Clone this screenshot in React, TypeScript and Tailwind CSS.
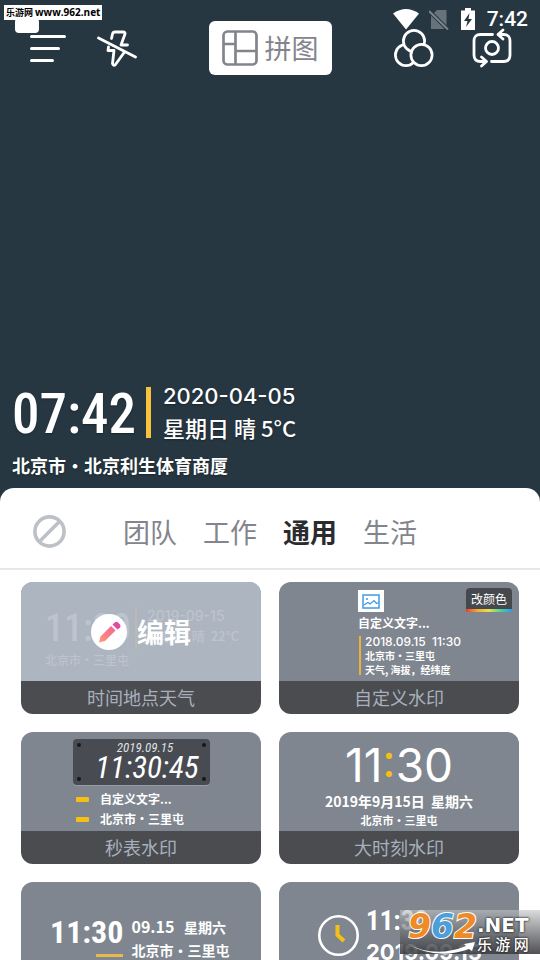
import type { ReactNode } from "react";

const cjk = "font-['Noto_Sans_CJK_SC','Noto_Sans_CJK_TC',sans-serif]";
const digits = "font-['Roboto_Condensed','Noto_Sans_CJK_SC',sans-serif]";
const inter = "font-['Inter','Noto_Sans_CJK_SC',sans-serif]";
const shadow = "[text-shadow:0_1px_2px_rgba(0,0,0,0.35)]";

function MenuIcon() {
  return (
    <svg viewBox="0 0 36 30" className="h-[30px] w-9" fill="none" stroke="#fff" strokeWidth="3" strokeLinecap="round">
      <path d="M1.500 3.500H34.500M1.500 15.500H28.500M1.500 27.500H22.500" />
    </svg>
  );
}

function FlashOffIcon() {
  return (
    <svg viewBox="0 0 40 38" className="h-[38px] w-10" fill="none" stroke="#fff" strokeWidth="2.800" strokeLinecap="round" strokeLinejoin="round">
      <path d="M14.500 9.500L15.500 5Q16 3 18 3H26Q28.500 3 28 5L24 16H30.500" />
      <path d="M11.500 18L11 21.500H17L15.500 34.500Q16.500 37.500 18.500 35.500L27.500 23" />
      <path d="M1.500 9L38.500 28" />
    </svg>
  );
}

function CollageIcon() {
  return (
    <svg viewBox="0 0 36 36" className="size-9" fill="none" stroke="#83858d" strokeWidth="2.700">
      <rect x="1.500" y="1.500" width="33" height="33" rx="4" />
      <path d="M13.500 1.500V34.500M1.500 14H13.500M13.500 21H34.500" />
    </svg>
  );
}

function FilterIcon() {
  return (
    <svg viewBox="0 0 40 40" className="size-10" fill="#263742" stroke="#fff" strokeWidth="2.700">
      <circle cx="12" cy="27" r="10.600" />
      <circle cx="20" cy="13" r="10.600" />
      <circle cx="27.500" cy="27" r="10.600" />
    </svg>
  );
}

function SwitchCameraIcon() {
  return (
    <svg viewBox="0 0 40 40" className="size-10" fill="none" stroke="#fff" strokeWidth="2.800" strokeLinecap="round" strokeLinejoin="round">
      <path d="M20.500 6.500H8.500Q2 6.500 2 13V27Q2 33.500 8.500 33.500H14" />
      <path d="M19.500 33.500H31.500Q38 33.500 38 27V13Q38 6.500 31.500 6.500H26.500" />
      <path d="M31 2L26 6.500L31 11M9.500 29L14.500 33.500L9.500 38" />
      <circle cx="20" cy="20" r="6.500" />
    </svg>
  );
}

function StatusBar() {
  return (
    <div className="absolute top-[7px] right-3 flex items-center text-white">
      <svg viewBox="0 0 26 22" className="h-[22px] w-[26px]" fill="#fff">
        <path d="M0 5.500Q13-3.500 26 5.500L13 21.500Z" />
      </svg>
      <svg viewBox="0 0 20 22" className="ml-[10px] h-[22px] w-5">
        <path d="M8 2H17.500V21H2V8Z" fill="#67727a" />
        <path d="M0 3L19 21.500" stroke="#263742" strokeWidth="4" />
        <path d="M0 3L19 21.500" stroke="#7b858b" strokeWidth="2" />
      </svg>
      <svg viewBox="0 0 14 22" className="mr-3 ml-3 h-[22px] w-[14px]">
        <path d="M4 0H10V2.500H14V22H0V2.500H4Z" fill="#fff" />
        <path d="M8.500 5L3 13H6.500L5 19L11 11H7.500Z" fill="#263742" />
      </svg>
      <span className="font-['Roboto',sans-serif] text-[21px] leading-6 font-medium">7:42</span>
    </div>
  );
}

function Card({ label, children, extra }: { label: string; children: ReactNode; extra?: ReactNode }) {
  return (
    <article className="relative overflow-hidden rounded-xl">
      <button type="button" className="block w-full text-left">
        <span className="block h-[99px] bg-[#80868f] text-white">{children}</span>
        <span className="block h-[33px] bg-[#4a4c50] text-center text-lg leading-8 text-[#a9b0bd]">{label}</span>
      </button>
      {extra}
    </article>
  );
}

function WeatherCard() {
  return (
    <Card label="时间地点天气">
      <span className="relative block h-full bg-[#adb5c0] pt-6 pl-6 text-[#bec4cd]">
        <span className="flex gap-[10px]">
          <span className={`${digits} w-20 text-[38px] leading-[44px] font-medium`}>11:30</span>
          <span className="w-0.5 bg-[#bdb9ad]" />
          <span className="text-[13px] leading-5 font-medium">
            <span className={`${inter} block text-sm leading-5`}>2019-09-15</span>
            <span className="block whitespace-pre">星期日  晴  22°C</span>
          </span>
        </span>
        <span className="block text-xs leading-5 font-medium">北京市・三里屯</span>
        <span className="absolute inset-0 flex items-center justify-center gap-[10px] text-white">
          <svg viewBox="0 0 36 36" className="size-9">
            <defs>
              <linearGradient id="pencil" x1="0" y1="1" x2="1" y2="0">
                <stop offset="0" stopColor="#ff9a76" />
                <stop offset="1" stopColor="#f0609a" />
              </linearGradient>
            </defs>
            <circle cx="18" cy="18" r="18" fill="#fff" />
            <path d="M8 28.500L9.500 22.500L20 12L24.500 16.500L14 27Z" fill="url(#pencil)" />
            <path d="M21.500 10.500L24 8.200Q25.500 7 27 8.500L29 10.500Q30.300 12 29 13.500L26.500 15.500Z" fill="#e4489f" />
          </svg>
          <span className="text-[27px] leading-9 font-bold">编辑</span>
        </span>
      </span>
    </Card>
  );
}

function CustomCard() {
  return (
    <Card
      label="自定义水印"
      extra={
        <button type="button" className="absolute top-1.5 right-[7px] w-[46px] overflow-hidden rounded-t bg-[#45484c] text-xs text-white">
          <span className="block leading-[21px]">改颜色</span>
          <span className="block h-[3px] bg-[linear-gradient(90deg,#e8402c,#f5a93b,#e8e04a,#4fd0a0,#2b9bf0)]" />
        </button>
      }
    >
      <span className="block pt-2 pl-[79px]">
        <svg viewBox="0 0 26 22" className="h-[22px] w-[26px]" fill="none" stroke="#3f9be6" strokeWidth="1.500">
          <rect width="26" height="22" fill="#fff" stroke="none" />
          <rect x="5" y="5" width="16" height="13" />
          <path d="M6 15L10 12.500L12 14L16 10.500L18.500 13.500L20.500 12.500" strokeWidth="1.200" />
          <circle cx="9" cy="9" r="1" fill="#3f9be6" stroke="none" />
        </svg>
        <span className="block text-xs leading-[22px] font-bold">自定义文字...</span>
        <span className="flex gap-1">
          <span className="my-0.5 ml-px w-0.5 bg-[#e9b23c]" />
          <span className="text-[10px] leading-[14px] font-bold">
            <span className={`${inter} block text-xs leading-[15px] font-medium whitespace-pre`}>2018.09.15  11:30</span>
            <span className="block">北京市・三里屯</span>
            <span className="block">天气, 海拔，经纬度</span>
          </span>
        </span>
      </span>
    </Card>
  );
}

function StopwatchCard() {
  return (
    <Card label="秒表水印">
      <span className="flex flex-col items-center pt-[7px]">
        <span className={`${digits} relative block h-[46px] w-[137px] rounded bg-[#484b51] pt-[3px] text-center italic shadow-[0_1px_0_#979ca3]`}>
          <span className="absolute top-1 left-1 size-1 rounded-full bg-[#17181a]" />
          <span className="absolute top-1 right-1 size-1 rounded-full bg-[#17181a]" />
          <span className="absolute bottom-1 left-1 size-1 rounded-full bg-[#17181a]" />
          <span className="absolute right-1 bottom-1 size-1 rounded-full bg-[#17181a]" />
          <span className="block pl-2 text-[13px] leading-3 text-[#dfe0e2]">2019.09.15</span>
          <span className="block pl-3 text-[31px] leading-7">11:30:45</span>
        </span>
      </span>
      <span className="mt-1 block pl-[55px] text-xs leading-5 font-bold">
        <span className="flex items-center gap-[11px]">
          <span className="h-[5px] w-[13px] rounded-[1px] bg-[#f5c015]" />
          自定义文字...
        </span>
        <span className="flex items-center gap-[11px]">
          <span className="h-[5px] w-[13px] rounded-[1px] bg-[#f5c015]" />
          北京市・三里屯
        </span>
      </span>
    </Card>
  );
}

function BigTimeCard() {
  return (
    <Card label="大时刻水印">
      <span className="block pt-2 text-center font-bold">
        <span className={`${inter} block text-[46px] leading-[50px] font-normal`}>
          11<span className="text-[#f5c015]">:</span>30
        </span>
        <span className="block text-sm leading-[22px] whitespace-pre">2019年9月15日  星期六</span>
        <span className="block text-[11px] leading-4">北京市・三里屯</span>
      </span>
    </Card>
  );
}

function UnderlineCard() {
  return (
    <Card label="时间下划线">
      <span className="flex gap-2 pt-[33px] pl-[29px] font-bold">
        <span className={`${digits} block text-[32px] leading-[34px]`}>
          11:30
          <span className="mt-[5px] ml-auto block h-[3px] w-[27px] bg-[#e9b94a]" />
        </span>
        <span className="block text-sm leading-[23px]">
          <span className="block whitespace-pre">
            <span className="text-base leading-[23px]">09.15</span>   星期六
          </span>
          <span className="block">北京市・三里屯</span>
        </span>
      </span>
    </Card>
  );
}

function ClockCard() {
  return (
    <Card label="时钟水印">
      <span className="flex gap-[7px] pt-6 pl-[39px] font-bold">
        <svg viewBox="0 0 41 41" className="mt-[9px] size-[41px]" fill="none">
          <circle cx="20.500" cy="20.500" r="19.200" stroke="#fff" strokeWidth="2.600" />
          <path d="M19.500 10V20L26 26" stroke="#f5c015" strokeWidth="4" />
        </svg>
        <span className="block">
          <span className={`${digits} block text-[27px] leading-[30px]`}>11:30</span>
          <span className={`${inter} block text-[22px] leading-8`}>2019.09.15</span>
        </span>
      </span>
    </Card>
  );
}

function SiteBadge() {
  return (
    <div className="absolute right-0 bottom-1.5 flex h-11 w-[140px] bg-linear-to-b from-[#c3c5c8]/60 to-[#3c3e42]/90 pl-2 text-white">
      <svg viewBox="0 0 70 12" className="absolute bottom-0 left-1.5 h-3 w-[70px]" fill="#fff">
        <path d="M0 1Q28 17 60 4L58 2L69 0L66 9L63 7Q30 19 0 1Z" />
      </svg>
      <span className="font-['DejaVu_Sans',sans-serif] text-[33px] leading-[34px] font-bold text-[#f08a24] italic [paint-order:stroke] [-webkit-text-stroke:2px_white]">
        9<span className="text-[#4d9fdc]">6</span>2
      </span>
      <span className="block pt-[5px] [text-shadow:0_0_2px_#222,0_0_2px_#222]">
        <span className="block font-['DejaVu_Sans',sans-serif] text-[20px] leading-5 font-bold">.NET</span>
        <span className="block text-[15px] leading-[18px] font-medium">乐 游 网</span>
      </span>
    </div>
  );
}

const tabs = ["团队", "工作", "通用", "生活"];

export default function App() {
  return (
    <div className={`${cjk} relative flex h-screen flex-col overflow-hidden bg-[#263742]`} lang="zh-CN">
      <header className="grid grid-cols-[1fr_auto_1fr] items-center pt-[21px]">
        <div className="flex items-center gap-[31px] pl-[30px]">
          <button type="button" aria-label="菜单"><MenuIcon /></button>
          <button type="button" aria-label="闪光灯"><FlashOffIcon /></button>
        </div>
        <button type="button" className="flex h-[54px] items-center gap-[7px] rounded-md bg-white px-[13px] text-[27px] leading-9 text-[#83858d]">
          <CollageIcon />
          拼图
        </button>
        <div className="flex items-center justify-end gap-[38px] pr-7">
          <button type="button" aria-label="滤镜"><FilterIcon /></button>
          <button type="button" aria-label="切换摄像头"><SwitchCameraIcon /></button>
        </div>
      </header>
      <StatusBar />
      <div className="absolute top-[18px] left-[15px] h-[15px] w-6 rounded-sm bg-white" />
      <div className="absolute top-[5px] left-1 bg-white px-0.5 text-[9px] leading-[14px] font-bold whitespace-nowrap text-black">
        乐游网 <span className="font-['Open_Sans',sans-serif] text-[10px] leading-[14px]">www.962.net</span>
      </div>

      <main className="flex flex-1 flex-col justify-end pb-[9px] pl-3 text-white">
        <div className={`${shadow} flex items-center`}>
          <time className={`${digits} pt-1 text-[55px] leading-[58px] font-medium`}>07:42</time>
          <span className="mr-3 ml-[10px] h-[51px] w-[5px] bg-[#f9c23c]" />
          <div className="text-[22px] leading-[31px] font-medium">
            <p className={inter}>2020-04-05</p>
            <p>星期日 晴 5°C</p>
          </div>
        </div>
        <p className={`${shadow} mt-2 text-lg leading-7 font-bold`}>北京市・北京利生体育商厦</p>
      </main>

      <section className="h-[472px] shrink-0 overflow-hidden rounded-t-[14px] bg-white">
        <nav className="flex h-[82px] items-center border-b-2 border-[#e6e6eb] pt-1.5 pl-[33px]">
          <button type="button" aria-label="无水印">
            <svg viewBox="0 0 33 33" className="size-[33px]" fill="none" stroke="#bcc1c8" strokeWidth="3.600">
              <circle cx="16.500" cy="16.500" r="14.600" />
              <path d="M6.500 26.500L26.500 6.500" />
            </svg>
          </button>
          <div className="ml-[57px] flex gap-[26px] pt-0.5 text-[27px] leading-9 text-[#83858d]">
            {tabs.map((tab) => (
              <button key={tab} type="button" className={tab === "通用" ? "font-bold text-[#2b2b2d]" : ""}>
                {tab}
              </button>
            ))}
          </div>
        </nav>
        <div className="grid grid-cols-2 gap-[18px] px-[21px] pt-3">
          <WeatherCard />
          <CustomCard />
          <StopwatchCard />
          <BigTimeCard />
          <UnderlineCard />
          <ClockCard />
        </div>
      </section>
      <SiteBadge />
    </div>
  );
}
